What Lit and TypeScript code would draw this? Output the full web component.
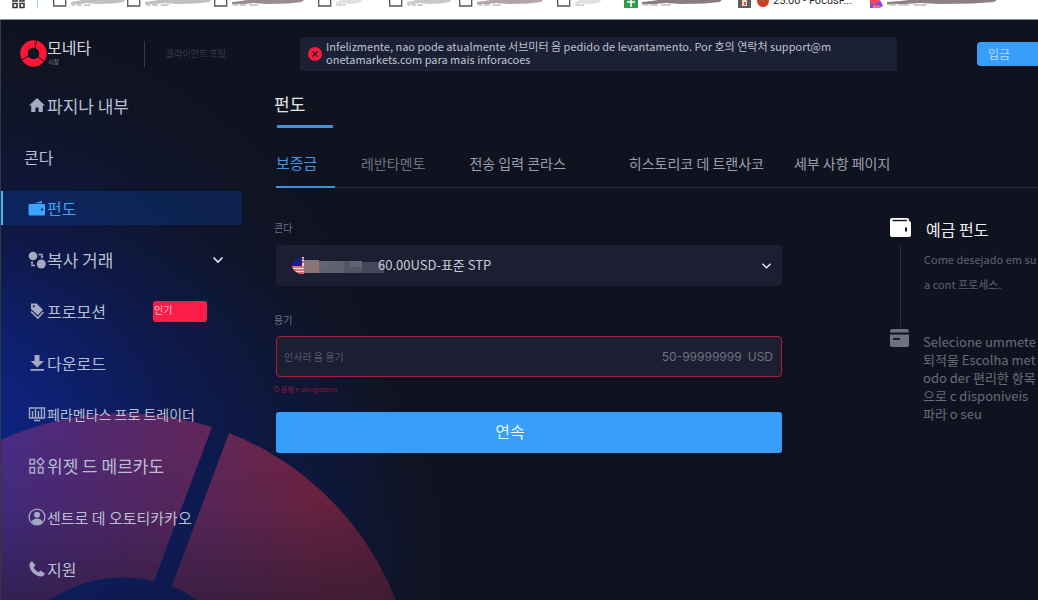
import { LitElement, html, svg, css } from "lit";
import { customElement } from "lit/decorators.js";
import { classMap } from "lit/directives/class-map.js";

const icons: Record<string, unknown> = {
  home: svg`<path d="M9 2 1 9.6h2.2V16h4.2v-4.6h3.2V16h4.2V9.6H17z"/>`,
  wallet: svg`<path d="M1 5h15a1 1 0 0 1 1 1v9.500a1 1 0 0 1-1 1H2a1.500 1.500 0 0 1-1.500-1.500V6z"/><path d="M6 4.200 14 2v2.200z"/><circle cx="14" cy="10.500" r="1.100" fill="#0d1f52"/>`,
  copy: svg`<circle cx="5" cy="5" r="4.300"/><circle cx="13.300" cy="13" r="4.500"/><path d="M10.500 3.500H14V6M4 11v3.500h3" fill="none" stroke="currentColor" stroke-width="1.300"/><path d="m12.300 5.500 1.700 2 1.700-2zM2.500 12l1.500-2 1.500 2z"/>`,
  tag: svg`<path d="M3 1.500h5.500l6.500 6.300-5.200 5.400L3 7z"/><circle cx="5.800" cy="4.300" r="1" fill="#0d1b58"/><path d="m3 9.500 6.800 6.500L15.500 10" fill="none" stroke="currentColor" stroke-width="1.600"/>`,
  download: svg`<path d="M6.500 1h5v6H16l-6.800 6.500L2.500 7h4zM2.500 15h13.500v1.700H2.500z"/>`,
  monitor: svg`<g fill="none" stroke="currentColor" stroke-width="1.400"><path d="M1.500 3h15v10h-15zM6 15.500h6"/><path d="M4.500 6v7M7.500 4v9M10.500 6v7M13.500 4v9"/></g>`,
  widgets: svg`<g fill="none" stroke="currentColor" stroke-width="1.500"><path d="M2 2.500h4.500V7H2zM2 10.500h4.500V16H2zM10.500 10.500H15V16h-4.500zM12.500 1 16 4.700l-3.500 3.600L9 4.700z"/></g>`,
  user: svg`<circle cx="9" cy="9" r="7.900" fill="none" stroke="currentColor" stroke-width="1.300"/><circle cx="9" cy="6.800" r="3"/><path d="M3.500 13.500c2-4 9-4 11 0-2.500 4-8.500 4-11 0z"/>`,
  phone: svg`<path d="M1.500 3.500 4 1l3.500 4.300-1.800 2c.8 2 2.800 4 5 5l2-1.900 4.300 3.300L15 16.300C8 17.500.5 10.500 1.500 3.500z"/>`,
};

const icon = (name: string) =>
  html`<svg class="icon" viewBox="0 0 18 18" fill="currentColor" aria-hidden="true">${icons[name]}</svg>`;

const chevron = html`<svg class="chevron" viewBox="0 0 12 8" aria-hidden="true"><path d="m1.500 1.500 4.500 4.500 4.500-4.500" fill="none" stroke="#e4e6ee" stroke-width="1.600"/></svg>`;

interface BrowserTab { kind: string; width: number; label?: string; smear?: number; tone?: string }

@customElement("browser-strip")
class BrowserStrip extends LitElement {
  tabs: BrowserTab[] = [
    { kind: "page", width: 74, smear: 54, tone: "#a9a4a6" },
    { kind: "page", width: 87, smear: 66, tone: "#a9a4a6" },
    { kind: "page", width: 104, smear: 72, tone: "#6b5c60" },
    { kind: "page", width: 71, smear: 26, tone: "#d5d1d2" },
    { kind: "page", width: 70, smear: 44, tone: "#b5b0b2" },
    { kind: "page", width: 98, smear: 66, tone: "#8f7f84" },
    { kind: "page", width: 67, smear: 26, tone: "#d5d1d2" },
    { kind: "sheet", width: 114, smear: 80, tone: "#56474b" },
    { kind: "timer", width: 132, label: "25:00 - FocusF..." },
    { kind: "clip", width: 165, smear: 110, tone: "#5d4a4d" },
  ];

  static styles = css`
    :host { display: flex; height: 19px; overflow: hidden; background: #fff; border-bottom: 1px solid #8b9599; font-family: Roboto, "Noto Sans CJK KR", sans-serif; }
    .apps { flex: none; width: 53px; display: flex; gap: 12px; padding-left: 12px; box-sizing: border-box; }
    .apps svg { width: 13px; height: 9px; }
    .sep { width: 1px; height: 8px; background: #9dd0e0; }
    .tab { flex: none; display: flex; gap: 4px; align-items: flex-start; height: 19px; }
    .glyph { flex: none; height: 9px; }
    .smear { flex: none; height: 9px; }
    .label { font-size: 11px; line-height: 14px; margin-top: -6px; color: #2c2c30; white-space: nowrap; }
  `;

  glyph(kind: string) {
    switch (kind) {
      case "sheet":
        return html`<svg class="glyph" width="14" height="9" viewBox="0 0 14 9"><path d="M0 0h14v8H0z" fill="#2f9e4b"/><path d="M3 2h8M7 0v7" stroke="#fff" stroke-width="1.600"/></svg>`;
      case "timer":
        return html`<svg class="glyph" width="31" height="9" viewBox="0 0 31 9"><path d="M0 0h13v8H0z" fill="#5b5f61"/><path d="M4 0h5v6H4z" fill="#f3d6c4"/><path d="M6 2h2v3H6z" fill="#d4603c"/><path d="M19 0h12c0 4-2 7-6 7s-6-3-6-7z" fill="#d63a26"/><path d="M23 0h4l-2 2z" fill="#5c8c33"/></svg>`;
      case "clip":
        return html`<svg class="glyph" width="13" height="9" viewBox="0 0 13 9"><path d="M0 3c4 1 8 0 10-3l3 6-4 2H0z" fill="#7a48f5"/><path d="M0 0h10C8 4 4 4 0 4z" fill="#f0455c"/><path d="M3 5c4 0 7 0 9 2l-3 1H3z" fill="#fa6a6a"/></svg>`;
      default:
        return html`<svg class="glyph" width="14" height="9" viewBox="0 0 14 9"><path d="M.700 0v6h12V0" fill="none" stroke="#55565a" stroke-width="1.300"/></svg>`;
    }
  }

  smear(t: BrowserTab) {
    return html`<svg class="smear" width=${t.smear!} height="9" viewBox="0 0 100 9" preserveAspectRatio="none"><path d="M0 2 12 1 20 0h80l-3 2-19 1.500-30 .5-18-1-14 1-16 .5z" fill=${t.tone!} opacity=".7"/><path d="M2 5h6M11 5h9M24 5h12" stroke="#d0cccd" stroke-width="2"/></svg>`;
  }

  render() {
    return html`
      <div class="apps">
        <svg viewBox="0 0 13 9"><g fill="none" stroke="#333" stroke-width="1.500"><path d="M1 -3h4v4H1zM8 -3h4v4H8zM1 3.500h4v4H1zM8 3.500h4v4H8z"/></g></svg>
        <span class="sep"></span>
      </div>
      ${this.tabs.map((t) => html`
        <div class="tab" style="width:${t.width}px">
          ${this.glyph(t.kind)}
          ${t.label ? html`<span class="label">${t.label}</span>` : this.smear(t)}
        </div>`)}
    `;
  }
}

interface NavItem { icon?: string; text: string; size: string; active?: boolean; badge?: string; more?: boolean }

@customElement("side-nav")
class SideNav extends LitElement {
  items: NavItem[] = [
    { icon: "home", text: "파지나 내부", size: "l" },
    { text: "콘다", size: "m" },
    { icon: "wallet", text: "펀도", size: "m", active: true },
    { icon: "copy", text: "복사 거래", size: "l", more: true },
    { icon: "tag", text: "프로모션", size: "m", badge: "인기" },
    { icon: "download", text: "다운로드", size: "m" },
    { icon: "monitor", text: "페라멘타스 프로 트레이더", size: "xs" },
    { icon: "widgets", text: "위젯 드 메르카도", size: "l" },
    { icon: "user", text: "센트로 데 오토티카카오", size: "s" },
    { icon: "phone", text: "지원", size: "m" },
  ];

  static styles = css`
    :host { display: block; }
    nav { height: 100%; box-sizing: border-box; display: flex; flex-direction: column; justify-content: space-between; padding: 1px 0 14px; }
    a { display: flex; align-items: center; height: 34px; box-sizing: border-box; padding: 0 18px 0 27px; color: #b9bfd3; text-decoration: none; white-space: nowrap; }
    a.plain { padding-left: 23px; }
    a.active { color: #3fa0f5; background: rgba(12, 62, 150, 0.36); border-left: 2px solid #4fb0fa; padding-left: 25px; border-radius: 0 3px 3px 0; }
    .icon { width: 18px; height: 18px; flex: none; margin-right: 1px; color: #a5aac4; }
    .active .icon { color: #3da2fb; }
    .l { font-size: 17px; }
    .m { font-size: 16px; }
    .s { font-size: 15px; }
    .xs { font-size: 14px; }
    .badge { margin: 0 17px 0 auto; width: 54px; height: 21px; box-sizing: border-box; padding-left: 1px; border-radius: 3px; background: #fb1c49; color: #ffc4cf; font-size: 10px; line-height: 18px; }
    .chevron { width: 12px; height: 8px; margin-left: auto; }
  `;

  render() {
    return html`<nav>
      ${this.items.map((i) => html`
        <a href="#" class=${classMap({ active: !!i.active, plain: !i.icon })}>
          ${i.icon ? icon(i.icon) : ""}<span class=${i.size}>${i.text}</span>
          ${i.badge ? html`<span class="badge">${i.badge}</span>` : ""}
          ${i.more ? chevron : ""}
        </a>`)}
    </nav>`;
  }
}

@customElement("fund-form")
class FundForm extends LitElement {
  static styles = css`
    :host { display: block; }
    label { display: block; font-size: 10px; line-height: 16px; color: #6c7183; }
    .field { position: relative; height: 41px; margin: 9px 0 26px 2px; border-radius: 4px; background: #1b1f31; }
    select, .amount { height: 41px; box-sizing: border-box; border-radius: 4px; color: #c9ccd6; font-family: inherit; }
    select { position: relative; width: 100%; appearance: none; border: 0; padding: 0 40px 2px 102px; font-size: 13px; background: none; }
    .flag { position: absolute; left: 16px; top: 11px; width: 94px; height: 19px; }
    .chevron { position: absolute; right: 10px; top: 17px; width: 11px; height: 8px; pointer-events: none; }
    .amount { display: flex; align-items: center; gap: 6px; margin: 8px 0 0 2px; padding: 0 8px 0 7px; border: 1px solid #b01c3c; background: #1b1f31; font: 12px Inter, "Noto Sans CJK KR", sans-serif; color: #6e7280; }
    input { flex: 1; min-width: 0; border: 0; outline: 0; padding: 0; background: none; color: #c9ccd6; font: 10px "Noto Sans CJK KR", sans-serif; }
    input::placeholder { color: #585d6f; opacity: 1; }
    .error { margin: 0; height: 35px; box-sizing: border-box; padding-top: 6px; font-size: 7px; line-height: 12px; color: #8a1738; }
    button { display: block; width: calc(100% - 2px); height: 41px; margin-left: 2px; border: 0; border-radius: 3px; padding: 0 38px 4px 0; background: #379ffb; color: #e9f5ff; font: 16px "Noto Sans CJK KR", sans-serif; }
  `;

  render() {
    return html`
      <form @submit=${(e: Event) => e.preventDefault()}>
        <label for="account">콘다</label>
        <div class="field">
          <svg class="flag" viewBox="0 0 94 19" aria-hidden="true">
            <path d="M0 10C1 5 5 1 12 1v9z" fill="#1c1f88"/>
            <path d="M10 1h2v9h-2z" fill="#e8d5dc"/>
            <path d="M0 10h12v8C6 18 1 15 0 10z" fill="#f0dedf"/>
            <path d="M0 11h12M2 14h10M6 17h6M10 3h2M10 6h2" stroke="#cf4a52" stroke-width="1.300"/>
            <path d="M12 4h15v13H12z" fill="#8b7478"/><path d="M27 5h25v12H27z" fill="#5f616e"/><path d="M52 5h18v12H52z" fill="#535665"/><path d="M70 6h22v11H70z" fill="#434757"/>
            <path d="M27 5h12v6H27zM58 5h12v6H58z" fill="#686a76" opacity=".6"/>
          </svg>
          <select id="account"><option>60.00USD-표준 STP</option></select>
          ${chevron}
        </div>
        <label for="amount">용기</label>
        <div class="amount">
          <input id="amount" placeholder="인사라 음 용기" aria-describedby="amount-error" />
          <span>50-99999999</span><span>USD</span>
        </div>
        <p class="error" id="amount-error">O 음행 e obrigatorio</p>
        <button type="submit">연속</button>
      </form>`;
  }
}

@customElement("fund-steps")
class FundSteps extends LitElement {
  static styles = css`
    :host { display: block; white-space: nowrap; }
    ol { list-style: none; margin: 0; padding: 0; }
    li { display: grid; grid-template-columns: 21px 1fr; column-gap: 12px; }
    .rail { display: flex; flex-direction: column; gap: 7px; }
    .rail svg { width: 21px; height: 21px; }
    .line { width: 1px; height: 82px; margin-left: 10px; background: #2b2f3d; }
    h2 { margin: 0 0 6px; padding-left: 3px; font-size: 16px; font-weight: 400; line-height: 24px; color: #eceef4; }
    p { margin: 0; color: #5e6270; }
    .lead { font-size: 11px; line-height: 25px; padding-left: 1px; }
    .body { font-size: 13px; line-height: 18px; color: #696d79; padding-top: 6px; }
  `;

  render() {
    return html`
      <ol>
        <li>
          <div class="rail">
            <svg viewBox="0 0 21 21" aria-hidden="true"><path d="M2 1h15a2 2 0 0 1 2 2v1a2 2 0 0 1 2 2v12a2 2 0 0 1-2 2H2a2 2 0 0 1-2-2V3a2 2 0 0 1 2-2z" fill="#fff"/><path d="M2.500 3.500H17" stroke="#10131f" stroke-width="1.400"/><path d="M15 10.500h2v4h-2z" fill="#10131f"/></svg>
            <span class="line"></span>
          </div>
          <div><h2>예금 펀도</h2><p class="lead">Come desejado em su<br />a cont 프로세스.</p></div>
        </li>
        <li>
          <div class="rail">
            <svg viewBox="0 0 21 21" aria-hidden="true"><path d="M2 2h15q2 0 2 3.500H0Q0 2 2 2zM0 7.500h19V18q0 2-2 2H2q-2 0-2-2z" fill="#6f727e"/><path d="M3 12h7" stroke="#10131f" stroke-width="1.800"/></svg>
          </div>
          <p class="body">Selecione ummete<br />퇴적물 Escolha met<br />odo der 편리한 항목<br />으로 c disponiveis<br />파라 o seu</p>
        </li>
      </ol>`;
  }
}

@customElement("app-root")
class AppRoot extends LitElement {
  tabs = [
    { text: "보증금", cls: "current" },
    { text: "레반타멘토", cls: "dim" },
    { text: "전송 입력 콘라스", cls: "wide" },
    { text: "히스토리코 데 트랜사코", cls: "" },
    { text: "세부 사항 페이지", cls: "" },
  ];

  static styles = css`
    :host { display: flex; flex-direction: column; min-height: 100vh; overflow: hidden; background: #10131f; font-family: "Noto Sans CJK KR", sans-serif; color: #c9ccd6; }
    .portal { position: relative; flex: 1; display: flex; flex-direction: column; border-left: 1px solid #343841; background: radial-gradient(ellipse 420px 400px at -40px 410px, rgba(13, 37, 140, 0.95) 0%, rgba(13, 33, 120, 0.85) 25%, rgba(14, 27, 85, 0.7) 50%, rgba(14, 23, 60, 0.45) 75%, rgba(16, 19, 31, 0) 100%), radial-gradient(circle at 130px 530px, #0b1d5c 0px, #0c1b50 90px, #0e173a 200px, #10131f 310px); }
    .ring { position: absolute; left: 0; bottom: 0; width: 420px; height: 200px; }
    header { position: relative; display: flex; align-items: center; height: 67px; }
    .brand { display: flex; align-items: center; width: 124px; padding-left: 19px; gap: 0; }
    .brand svg { width: 27px; height: 27px; }
    .name { font-size: 16px; line-height: 17px; color: #d4d7e0; }
    .sub { font-size: 6px; line-height: 10px; color: #83879a; padding: 1px 0 2px 1px; }
    .portal-name { width: 156px; height: 26px; box-sizing: border-box; border-left: 1px solid #343a50; padding-left: 21px; font-size: 9px; line-height: 26px; color: #343d52; }
    .alert { flex: 0 1 597px; box-sizing: border-box; height: 34px; display: flex; align-items: center; gap: 4px; padding: 0 8px; border-radius: 3px; background: #1b2034; font-size: 11px; line-height: 13px; color: #bfc3cf; white-space: nowrap; }
    .alert svg { width: 14px; height: 14px; flex: none; }
    .alert p { margin: 0 0 2px; }
    .deposit { flex: none; width: 80px; height: 24px; margin-left: auto; margin-right: -19px; padding: 0 0 0 11px; border: 0; border-radius: 4px; background: #379ffb; color: #b9dcfb; text-align: left; font: 12px "Noto Sans CJK KR", sans-serif; }
    .body { position: relative; flex: 1; display: grid; grid-template-columns: 241px minmax(0, 1fr); column-gap: 32px; }
    main { min-width: 0; }
    h1 { margin: 0; font-size: 17px; font-weight: 400; line-height: 34px; height: 41px; color: #e4e6ed; }
    h1::after { content: ""; display: block; width: 56px; height: 3px; margin: 4px 0 0 3px; background: #3d92dd; }
    .tabs { display: flex; height: 59px; margin-left: 2px; border-bottom: 1px solid #272b37; font-size: 14px; line-height: 70px; gap: 26px; }
    .tabs a { color: #9b9fac; text-decoration: none; white-space: nowrap; height: 59px; padding-right: 4px; }
    .tabs a.current { width: 59px; padding: 0; color: #3f95e3; font-size: 15px; border-bottom: 2px solid #3d92dd; height: 58px; }
    .tabs a.dim { color: #6d7280; padding-right: 18px; }
    .tabs a.wide { padding-right: 37px; }
    .content { display: grid; grid-template-columns: minmax(300px, 508px) minmax(148px, 1fr); column-gap: 108px; padding-top: 29px; }
    fund-form { padding-top: 3px; }
    fund-steps { min-width: 0; overflow: hidden; }
  `;

  render() {
    return html`
      <browser-strip></browser-strip>
      <div class="portal">
        <svg class="ring" viewBox="0 400 420 200" aria-hidden="true">
          <defs>
            <linearGradient id="hue" x1="0" y1="0" x2="400" y2="0" gradientUnits="userSpaceOnUse">
              <stop offset="0" stop-color="#482c84"/><stop offset=".3" stop-color="#56286a"/><stop offset=".55" stop-color="#622657"/><stop offset=".78" stop-color="#702340"/><stop offset="1" stop-color="#6a2036"/>
            </linearGradient>
            <linearGradient id="shade" x1="0" y1="440" x2="0" y2="605" gradientUnits="userSpaceOnUse">
              <stop offset="0" stop-color="#1a1838" stop-opacity="0"/><stop offset=".4" stop-color="#1a1838" stop-opacity=".12"/><stop offset="1" stop-color="#241830" stop-opacity=".62"/>
            </linearGradient>
          </defs>
          ${["url(#hue)", "url(#shade)"].map((fill) => svg`
            <g fill=${fill}>
              <path d="M-170 707A292 292 0 0 1 211 427L153 581A129 129 0 0 0 -7 707z"/>
              <path d="M228 433A292 292 0 0 1 414 707H251A129 129 0 0 0 171 586z"/>
            </g>`)}
        </svg>
        <header>
          <div class="brand">
            <svg viewBox="0 0 27 27" aria-hidden="true"><circle cx="13.500" cy="13.500" r="9.500" fill="none" stroke="#fb1735" stroke-width="7.500"/><path d="m15 8 1.500-8M9 16l-8 4M18 17l6 4" stroke="#10131f" stroke-width="1"/></svg>
            <div><div class="name">모네타</div><div class="sub">시장</div></div>
          </div>
          <div class="portal-name">클라이언트 포털</div>
          <div class="alert" role="alert">
            <svg viewBox="0 0 14 14" aria-hidden="true"><circle cx="7" cy="7" r="7" fill="#f8193c"/><path d="m4.500 4.500 5 5m0-5-5 5" stroke="#1b2034" stroke-width="1.200"/></svg>
            <p>Infelizmente, nao pode atualmente 서브미터 음 pedido de levantamento. Por 호의 연락처 support@m<br />onetamarkets.com para mais inforacoes</p>
          </div>
          <button class="deposit">입금</button>
        </header>
        <div class="body">
          <side-nav></side-nav>
          <main>
            <h1>펀도</h1>
            <div class="tabs">${this.tabs.map((t) => html`<a href="#" class=${t.cls}>${t.text}</a>`)}</div>
            <div class="content">
              <fund-form></fund-form>
              <fund-steps></fund-steps>
            </div>
          </main>
        </div>
      </div>`;
  }
}
